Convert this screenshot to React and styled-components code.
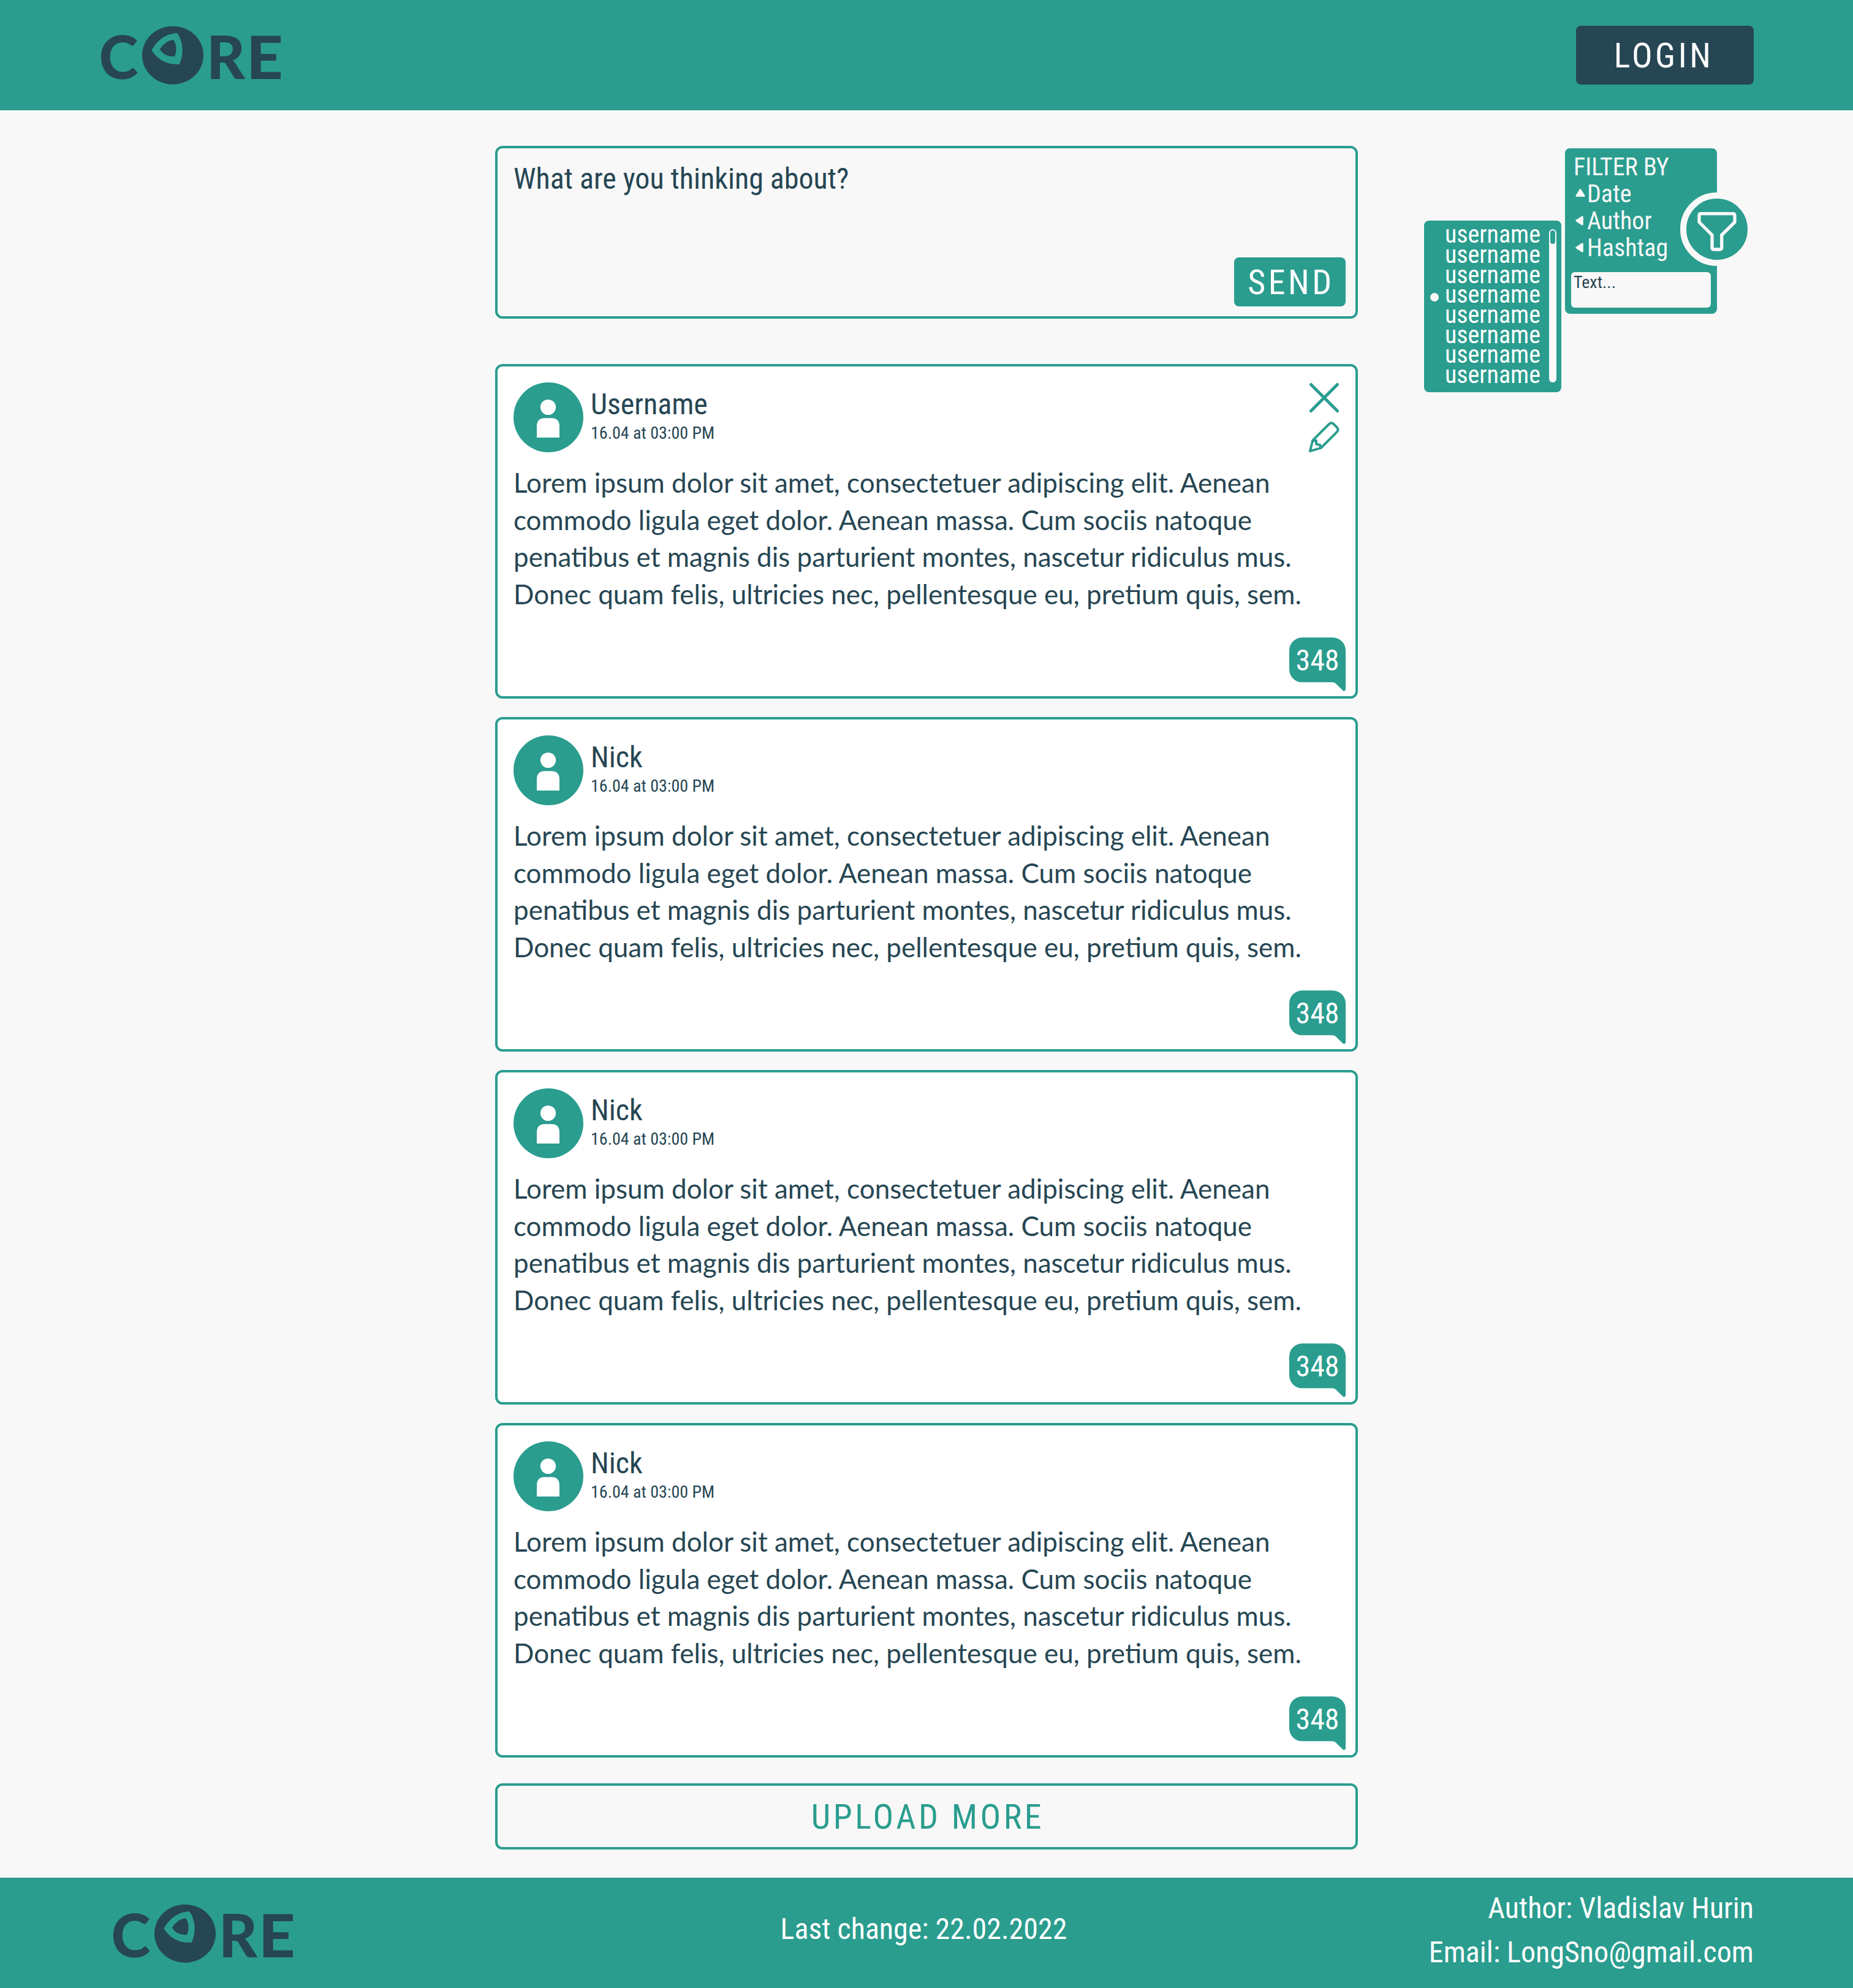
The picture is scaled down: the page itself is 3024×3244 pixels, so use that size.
import React from 'react';
import styled, { createGlobalStyle } from 'styled-components';

const teal = '#2a9d8f';
const navy = '#264653';
const paper = '#f8f8f8';
const condensed = '"Roboto Condensed", Roboto, "Liberation Sans", sans-serif';
const lato = 'Lato, "Open Sans", sans-serif';

const Global = createGlobalStyle`
  *, *::before, *::after { box-sizing: border-box; }
  body { margin: 0; background: ${paper}; color: ${navy}; font-family: ${condensed}; }
  button { font: inherit; color: inherit; border: 0; margin: 0; padding: 0; }
`;

const Page = styled.div`
  width: 3024px;
  height: 3244px;
  display: flex;
  flex-direction: column;
`;

const Bar = styled.div`
  flex: none;
  height: 180px;
  background: ${teal};
  color: #fff;
  display: grid;
  grid-template-columns: 1fr auto 1fr;
  align-items: center;
  padding: 0 162px 0 ${(p) => p.$left}px;
`;

const LogoSvg = styled.svg`
  display: block;
  width: 310px;
  height: 140px;
  color: ${navy};
`;

const LogoLetter = styled.text`
  font-family: ${lato};
  font-weight: 900;
  font-size: 97px;
  fill: currentColor;
`;

const LoginButton = styled.button`
  justify-self: end;
  grid-column: 3;
  width: 290px;
  height: 96px;
  padding: 2px 4px 0 0;
  border-radius: 8px;
  background: ${navy};
  color: #fff;
  font-size: 56px;
  line-height: 66px;
  letter-spacing: 0.08em;
`;

const Main = styled.main`
  flex: 1;
  display: grid;
  grid-template-columns: 1408px 1fr;
  column-gap: 108px;
  padding: 58px 162px 46px 808px;
`;

const Column = styled.div`
  display: flex;
  flex-direction: column;
`;

const Composer = styled.form`
  height: 282px;
  border: 4px solid ${teal};
  border-radius: 12px;
  padding: 22px 16px 16px 26px;
  display: flex;
  flex-direction: column;
  justify-content: space-between;
  margin-bottom: 74px;
`;

const Prompt = styled.div`
  font-size: 48px;
  line-height: 56px;
`;

const SendButton = styled.button`
  align-self: flex-end;
  width: 182px;
  height: 80px;
  padding: 2px 0 0 4px;
  border-radius: 8px;
  background: ${teal};
  color: #fff;
  font-size: 56px;
  line-height: 66px;
  letter-spacing: 0.08em;
`;

const Feed = styled.div`
  display: flex;
  flex-direction: column;
  gap: 30px;
`;

const Card = styled.article`
  height: 546px;
  border: 4px solid ${teal};
  border-radius: 12px;
  background: #fff;
  padding: 26px 16px 8px 26px;
  display: flex;
  flex-direction: column;
`;

const CardHead = styled.header`
  display: flex;
  align-items: flex-start;
  height: 114px;
`;

const Avatar = styled.svg`
  width: 114px;
  height: 114px;
  margin-right: 12px;
`;

const Who = styled.div`
  flex: 1;
  padding-top: 8px;
`;

const Name = styled.div`
  font-size: 48px;
  line-height: 56px;
`;

const When = styled.div`
  font-size: 28px;
  line-height: 34px;
  padding-top: 2px;
`;

const Actions = styled.div`
  display: flex;
  flex-direction: column;
  gap: 12px;
  padding-right: 9px;
`;

const ActionIcon = styled.svg`
  display: block;
  width: 52px;
  height: 52px;
  fill: none;
  stroke: ${teal};
  stroke-width: ${(p) => p.$weight}px;
  stroke-linecap: round;
  stroke-linejoin: round;
`;

const Body = styled.p`
  margin: 19px 0 0;
  font-family: ${lato};
  font-size: 44px;
  line-height: 60.6px;
  white-space: pre-line;
`;

const Comments = styled.div`
  margin-top: auto;
  align-self: flex-end;
  width: 92px;
  height: 88px;
  display: grid;
  color: #fff;
`;

const BubbleShape = styled.svg`
  grid-area: 1 / 1;
  width: 92px;
  height: 88px;
`;

const CommentCount = styled.span`
  grid-area: 1 / 1;
  height: 74px;
  font-size: 48px;
  line-height: 76px;
  text-align: center;
`;

const UploadButton = styled.button`
  margin-top: 42px;
  height: 108px;
  border: 4px solid ${teal};
  border-radius: 12px;
  padding: 2px 0 0 4px;
  background: transparent;
  color: ${teal};
  font-size: 56px;
  line-height: 66px;
  letter-spacing: 0.08em;
`;

const Filters = styled.aside`
  display: flex;
  align-items: flex-start;
  gap: 6px;
  padding-top: 4px;
`;

const UserList = styled.div`
  width: 224px;
  height: 280px;
  margin-top: 118px;
  border-radius: 8px;
  background: ${teal};
  color: #fff;
  display: flex;
  justify-content: space-between;
  padding: 7px 8px 0 10px;
`;

const Users = styled.ul`
  margin: 0;
  padding: 0;
  list-style: none;
`;

const User = styled.li`
  display: flex;
  align-items: center;
  height: 32.67px;
  font-size: 40px;
  line-height: 32px;
`;

const Dot = styled.span`
  width: 14px;
  height: 14px;
  margin: 7px 10px 0 0;
  border-radius: 50%;
  background: ${(p) => (p.$on ? paper : 'transparent')};
`;

const Scrollbar = styled.div`
  width: 12px;
  height: 250px;
  margin-top: 7px;
  padding: 2px;
  border-radius: 6px;
  background: ${paper};
`;

const Thumb = styled.div`
  height: 22px;
  border-radius: 4px;
  background: ${teal};
`;

const Panel = styled.div`
  position: relative;
  width: 248px;
  height: 270px;
  border-radius: 8px;
  background: ${teal};
  color: ${paper};
  padding: 9px 10px 10px;
  display: flex;
  flex-direction: column;
`;

const FilterLine = styled.div`
  display: flex;
  align-items: center;
  height: 44px;
  padding-left: ${(p) => (p.$title ? 4 : 6)}px;
  font-size: 40px;
  line-height: 44px;
`;

const Marker = styled.svg`
  width: 18px;
  height: 18px;
  margin-right: 2px;
  fill: ${paper};
  stroke: ${paper};
  stroke-width: 3;
  stroke-linejoin: round;
`;

const FilterText = styled.div`
  margin-top: auto;
  height: 58px;
  border-radius: 6px;
  background: ${paper};
  color: ${navy};
  padding: 0 4px;
  font-size: 28px;
  line-height: 33px;
`;

const FunnelButton = styled.button`
  position: absolute;
  right: -60px;
  top: 72px;
  width: 120px;
  height: 120px;
  border: 10px solid ${paper};
  border-radius: 50%;
  background: ${teal};
`;

const FunnelIcon = styled.svg`
  display: block;
  width: 100px;
  height: 100px;
  fill: none;
  stroke: ${paper};
  stroke-width: 5.3;
  stroke-linejoin: round;
`;

const LastChange = styled.div`
  padding: 0 27px 12px 0;
  font-size: 48px;
  line-height: 72px;
`;

const Contacts = styled.div`
  padding-bottom: 8px;
  font-size: 48px;
  line-height: 72px;
  text-align: right;
`;

function Logo({ low }) {
  return (
    <LogoSvg viewBox={low ? '0 -21 310 140' : '0 -20 310 140'} role="img" aria-label="Core">
      <LogoLetter x="1.4" y="89">C</LogoLetter>
      <ellipse cx="122" cy="50.2" rx="50" ry="47.5" fill="currentColor" />
      <path
        d="M129.3 14 Q137.7 27 137.7 41 Q137.7 54 132.7 65 Q102 66 87.3 41.7 Q103 15 129.3 14 Z"
        fill={teal}
      />
      <path
        d="M123.3 25 Q127.5 32 127.5 40 Q127.5 47 125 52.3 Q108 53 100.7 40.3 Q110 26 123.3 25 Z"
        fill="currentColor"
      />
      <LogoLetter x="176.9" y="89">R</LogoLetter>
      <LogoLetter transform="translate(242.1 89) scale(1.073 1)">E</LogoLetter>
    </LogoSvg>
  );
}

const lorem = `Lorem ipsum dolor sit amet, consectetuer adipiscing elit. Aenean
commodo ligula eget dolor. Aenean massa. Cum sociis natoque
penatibus et magnis dis parturient montes, nascetur ridiculus mus.
Donec quam felis, ultricies nec, pellentesque eu, pretium quis, sem.`;

function Post({ name, own }) {
  return (
    <Card>
      <CardHead>
        <Avatar viewBox="0 0 114 114">
          <circle cx="57" cy="57" r="57" fill={teal} />
          <circle cx="56.5" cy="40.5" r="12.6" fill="#fff" />
          <path d="M38 90 V72 Q38 58.3 51 58.3 H62 Q75 58.3 75 72 V90 Z" fill="#fff" />
        </Avatar>
        <Who>
          <Name>{name}</Name>
          <When>16.04 at 03:00 PM</When>
        </Who>
        {own && (
          <Actions>
            <ActionIcon viewBox="0 0 52 52" $weight={5}>
              <path d="M4.5 3.5 L47.5 46.5 M47.5 3.5 L4.5 46.5" />
            </ActionIcon>
            <ActionIcon viewBox="0 0 52 52" $weight={3.9}>
              <path d="M7.3 30.7 L34 4 Q37.7 0.3 41.4 4 L46.8 9.4 Q50.3 13 46.8 16.8 L20.7 43 L2.8 48.2 Z" />
              <path d="M7.3 31 H13 V36.6 L19.2 38 L20 42.7" />
            </ActionIcon>
          </Actions>
        )}
      </CardHead>
      <Body>{lorem}</Body>
      <Comments>
        <BubbleShape viewBox="0 0 92 88">
          <path
            d="M21 0.3 H71 A21 21 0 0 1 92 21.3 V85 Q91 89 87.5 86.8 L76 75.5 Q73.5 73.3 70 73.3 H21 A21 21 0 0 1 0 52.3 V21.3 A21 21 0 0 1 21 0.3 Z"
            fill={teal}
          />
        </BubbleShape>
        <CommentCount>348</CommentCount>
      </Comments>
    </Card>
  );
}

function UserPicker() {
  return (
    <UserList>
      <Users>
        {Array.from({ length: 8 }, (_, i) => (
          <User key={i}>
            <Dot $on={i === 3} />
            username
          </User>
        ))}
      </Users>
      <Scrollbar>
        <Thumb />
      </Scrollbar>
    </UserList>
  );
}

const markerUp = 'M9 1.8 L15 11.6 H3 Z';
const markerLeft = 'M2.8 8 L12.3 2 V14.2 Z';

const filters = [
  { label: 'Date', marker: markerUp },
  { label: 'Author', marker: markerLeft },
  { label: 'Hashtag', marker: markerLeft },
];

function FilterPanel() {
  return (
    <Panel>
      <FilterLine $title>FILTER BY</FilterLine>
      {filters.map((f) => (
        <FilterLine key={f.label}>
          <Marker viewBox="0 0 18 18">
            <path d={f.marker} />
          </Marker>
          {f.label}
        </FilterLine>
      ))}
      <FilterText>Text...</FilterText>
      <FunnelButton aria-label="Filter">
        <FunnelIcon viewBox="0 0 100 100">
          <path d="M24 24.7 H76 Q79 24.7 79 27.7 V38.5 L57.7 59.5 V80 Q57.7 83 54.7 83 H45 Q42 83 42 80 V59.5 L21 38.5 V27.7 Q21 24.7 24 24.7 Z" />
        </FunnelIcon>
      </FunnelButton>
    </Panel>
  );
}

const posts = [{ name: 'Username', own: true }, { name: 'Nick' }, { name: 'Nick' }, { name: 'Nick' }];

export default function App() {
  return (
    <Page>
      <Global />
      <Bar as="header" $left={160}>
        <Logo />
        <LoginButton>LOGIN</LoginButton>
      </Bar>
      <Main>
        <Column>
          <Composer>
            <Prompt>What are you thinking about?</Prompt>
            <SendButton type="button">SEND</SendButton>
          </Composer>
          <Feed>
            {posts.map((p, i) => (
              <Post key={i} {...p} />
            ))}
          </Feed>
          <UploadButton>UPLOAD MORE</UploadButton>
        </Column>
        <Filters>
          <UserPicker />
          <FilterPanel />
        </Filters>
      </Main>
      <Bar as="footer" $left={180}>
        <Logo low />
        <LastChange>Last change: 22.02.2022</LastChange>
        <Contacts>
          <div>Author: Vladislav Hurin</div>
          <div>Email: LongSno@gmail.com</div>
        </Contacts>
      </Bar>
    </Page>
  );
}
